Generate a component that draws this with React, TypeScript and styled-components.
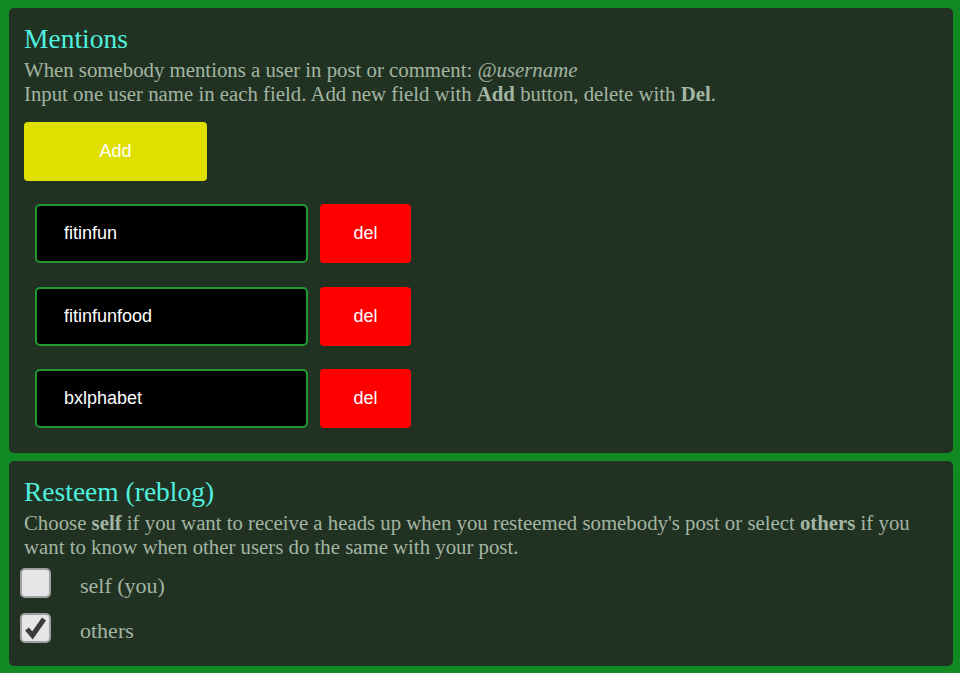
import React, { useState } from 'react'
import styled, { createGlobalStyle } from 'styled-components'

const GlobalStyle = createGlobalStyle`
    html, body {
        margin: 0;
        padding: 0;
        background-color: #128a23;
    }
    body {
        font-family: "Liberation Serif", "Times New Roman", serif;
    }
`

const Page = styled.div`
    display: flex;
    flex-direction: column;
    gap: 8px;
    padding: 8px 7px 8px 9px;
`

const Panel = styled.section`
    background-color: #223222;
    border-radius: 5px;
    padding: 12px 15px 25px 15px;
`

const Title = styled.h2`
    margin: 0;
    font-size: 27.5px;
    font-weight: normal;
    line-height: 38px;
    color: #4ff0df;
`

const Text = styled.p`
    margin: 0;
    font-size: 20.8px;
    line-height: 24px;
    color: #a3b5a3;
`

const AddButton = styled.button`
    display: block;
    width: 183px;
    height: 59px;
    margin-top: 16px;
    border: none;
    border-radius: 4px;
    background-color: #e0e000;
    color: #ffffff;
    font-family: "Liberation Sans", Arial, sans-serif;
    font-size: 18px;
    cursor: pointer;
`

const List = styled.div`
    display: flex;
    flex-direction: column;
    gap: 23.5px;
    margin-top: 23px;
    padding-left: 11px;
`

const Row = styled.div`
    display: flex;
    gap: 12px;
`

const NameInput = styled.input`
    box-sizing: border-box;
    width: 273px;
    height: 59px;
    padding: 0 0 0 27px;
    border: 2px solid #1f9a2e;
    border-radius: 5px;
    background-color: #000000;
    color: #ffffff;
    font-family: "Liberation Sans", Arial, sans-serif;
    font-size: 18px;
    outline: none;
`

const DelButton = styled.button`
    width: 91px;
    height: 59px;
    border: none;
    border-radius: 4px;
    background-color: #ff0000;
    color: #ffffff;
    font-family: "Liberation Sans", Arial, sans-serif;
    font-size: 18px;
    cursor: pointer;
`

const Options = styled.div`
    display: flex;
    flex-direction: column;
    gap: 15px;
    margin-top: 9px;
    margin-bottom: -2px;
    margin-left: -4px;
`

const Option = styled.label`
    display: flex;
    align-items: center;
    gap: 29px;
    font-size: 22px;
    color: #a3b5a3;
    cursor: pointer;
`

const OptionText = styled.span`
    line-height: 22px;
    padding-top: 6px;
`

const Box = styled.span`
    box-sizing: border-box;
    display: flex;
    align-items: center;
    justify-content: center;
    width: 31px;
    height: 30px;
    border: 2px solid #a0a0a0;
    border-radius: 5px;
    background-color: #e6e6e6;
`

const Check = () => (
    <svg width="26" height="26" viewBox="0 0 26 26">
        <polyline
            points="4,14 9.5,20.5 21,4"
            fill="none"
            stroke="#3c3c3c"
            strokeWidth="5"
            strokeLinejoin="miter"
        />
    </svg>
)

const users = ['fitinfun', 'fitinfunfood', 'bxlphabet']

export default function App() {
    const [self, setSelf] = useState(false)
    const [others, setOthers] = useState(true)

    return (
        <>
            <GlobalStyle />
            <Page>
                <Panel>
                    <Title>Mentions</Title>
                    <Text>
                        When somebody mentions a user in post or comment: <i>@username</i>
                        <br />
                        Input one user name in each field. Add new field with <b>Add</b> button, delete with <b>Del</b>.
                    </Text>
                    <AddButton>Add</AddButton>
                    <List>
                        {users.map((u) => (
                            <Row key={u}>
                                <NameInput defaultValue={u} />
                                <DelButton>del</DelButton>
                            </Row>
                        ))}
                    </List>
                </Panel>
                <Panel>
                    <Title>Resteem (reblog)</Title>
                    <Text>
                        Choose <b>self</b> if you want to receive a heads up when you resteemed somebody's post or select <b>others</b> if you want to know when other users do the same with your post.
                    </Text>
                    <Options>
                        <Option onClick={() => setSelf(!self)}>
                            <Box>{self && <Check />}</Box>
                            <OptionText>self (you)</OptionText>
                        </Option>
                        <Option onClick={() => setOthers(!others)}>
                            <Box>{others && <Check />}</Box>
                            <OptionText>others</OptionText>
                        </Option>
                    </Options>
                </Panel>
            </Page>
        </>
    )
}
